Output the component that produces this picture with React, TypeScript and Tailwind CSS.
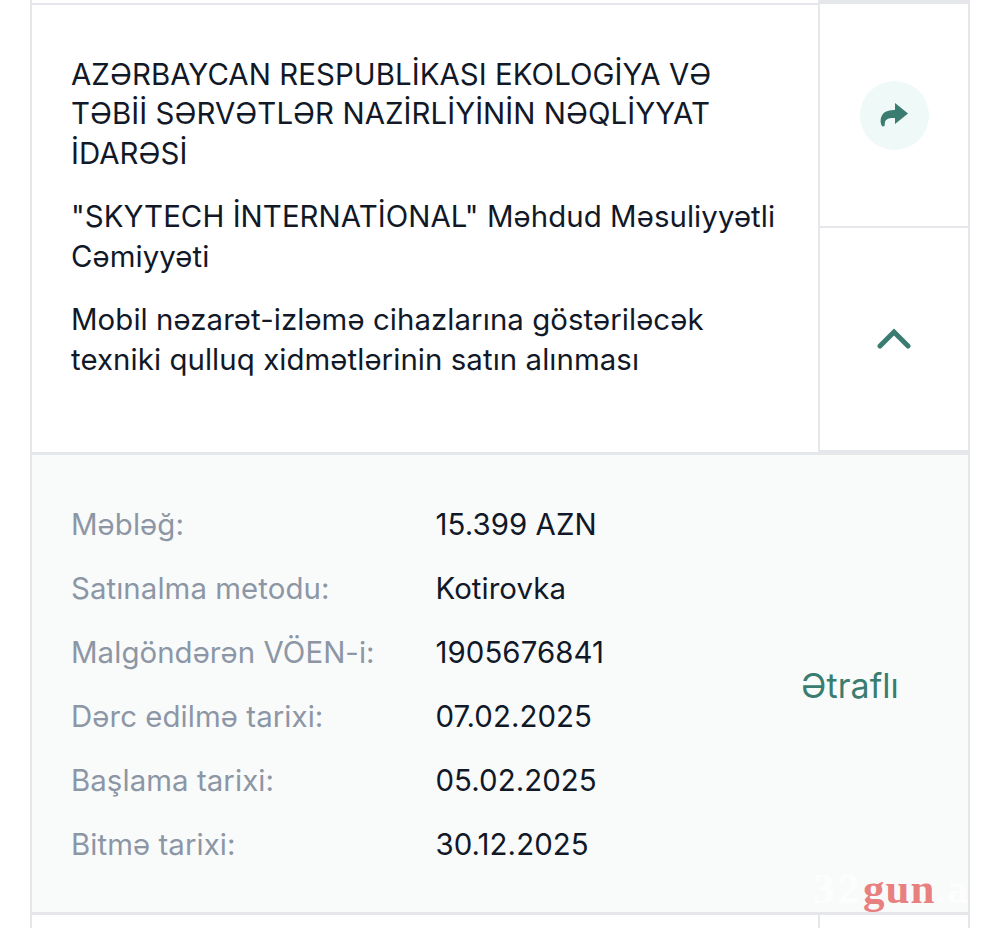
import React from 'react';

const rows = [
  ['Məbləğ:', '15.399 AZN'],
  ['Satınalma metodu:', 'Kotirovka'],
  ['Malgöndərən VÖEN-i:', '1905676841'],
  ['Dərc edilmə tarixi:', '07.02.2025'],
  ['Başlama tarixi:', '05.02.2025'],
  ['Bitmə tarixi:', '30.12.2025'],
];

export default function App() {
  return (
    <div className="relative h-[928px] w-[1000px] overflow-hidden bg-white font-['Inter',sans-serif] text-[29.4px] tracking-[0.07px]">
      <div className="mx-[30px] flex h-[928px] w-[940px] flex-col border-x-2 border-[#e5e7eb]">
        <div className="flex h-[452px]">
          <div className="mt-[3px] flex w-[786px] flex-col gap-[24.5px] border-t-2 border-[#e5e7eb] pl-[39px] pr-[30px] pt-[50px] text-[#111827]">
            <p className="leading-[39.3px]">AZƏRBAYCAN RESPUBLİKASI EKOLOGİYA VƏ TƏBİİ SƏRVƏTLƏR NAZİRLİYİNİN NƏQLİYYAT İDARƏSİ</p>
            <p className="leading-[39.3px]">"SKYTECH İNTERNATİONAL" Məhdud Məsuliyyətli Cəmiyyəti</p>
            <p className="leading-[39.3px]">Mobil nəzarət-izləmə cihazlarına göstəriləcək texniki qulluq xidmətlərinin satın alınması</p>
          </div>
          <div className="flex w-[150px] flex-col border-l-2 border-[#e5e7eb]">
            <div className="flex h-[228px] items-center justify-center border-b-2 border-t-[4px] border-[#e5e7eb]">
              <div className="flex h-[69px] w-[69px] items-center justify-center rounded-full bg-[#eff9f8]">
                <svg width="30" height="26" viewBox="0 0 30 26" fill="#3a7d70">
                  <path d="M16 1 L29 11.5 L16 22 L16 16 C11 15.5 7 16.5 6 20 L5.5 24 L3.5 24.5 C1 22 1 16 3.5 12.5 C6 9 11 8 16 8 Z" />
                </svg>
              </div>
            </div>
            <div className="flex flex-1 items-start justify-center border-b-2 border-[#e5e7eb] pt-[100px]">
              <svg width="34" height="22" viewBox="0 0 34 22" fill="none" stroke="#3a7d70" strokeWidth="5" strokeLinecap="round">
                <path d="M3 18 L17 4 L31 18" />
              </svg>
            </div>
          </div>
        </div>
        <div className="flex h-[463px] items-center border-y-[3px] border-[#e5e7eb] bg-[#f9fbfb] pl-[39px] pt-[3px]">
          <div className="flex w-[730px] flex-col gap-[24px]">
            {rows.map(([label, value]) => (
              <div key={label} className="flex h-[40px] items-center">
                <div className="w-[364.5px] text-[#8c96a5]">{label}</div>
                <div className="text-[#111827]">{value}</div>
              </div>
            ))}
          </div>
          <div className="text-[34px] text-[#3a7d70]">Ətraflı</div>
        </div>
        <div className="flex flex-1 justify-end">
          <div className="w-[150px] border-l-2 border-[#e5e7eb]" />
        </div>
      </div>
      <div className="absolute left-[813px] top-[864px] flex font-['Liberation_Serif',serif] text-[43px] font-bold leading-[50px] tracking-[1px]">
        <span className="tracking-[3.5px] text-white/70">32</span>
        <span className="text-[#e98080]">gun</span>
        <span className="text-white/70">.az</span>
      </div>
    </div>
  );
}
